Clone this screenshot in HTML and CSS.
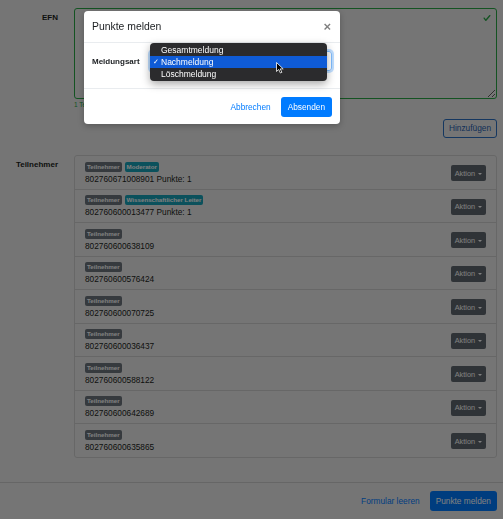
FILE: index.html
```html
<!DOCTYPE html>
<html lang="de">

<head>
    <meta charset="UTF-8">
    <meta name="viewport" content="width=device-width, initial-scale=1.0">
    <title>Punkte melden</title>
    <link rel="stylesheet" href="styles.css">
</head>

<body>
    <div class="page">
        <div class="form-row">
            <label class="row-label">EFN</label>
            <div class="row-field">
                <div class="efn-box">
                    <textarea class="efn-input"></textarea>
                    <svg class="valid-icon" viewBox="0 0 8 8" width="8" height="8">
                        <path fill="#28a745" d="M2.3 6.73L.6 4.53c-.4-1.04.46-1.4 1.1-.8l1.1 1.4 3.4-3.8c.6-.63 1.6-.27 1.2.7l-4 4.6c-.43.5-.8.4-1.1.1z"/>
                    </svg>
                </div>
                <div class="valid-feedback">1 Teilnehmer erkannt</div>
                <div class="add-line">
                    <button class="btn btn-outline">Hinzufügen</button>
                </div>
            </div>
        </div>

        <div class="form-row list-row">
            <label class="row-label">Teilnehmer</label>
            <ul class="member-list">
                <li class="member">
                    <div class="member-info">
                        <div class="badges"><span class="badge">Teilnehmer</span><span class="badge badge-teal">Moderator</span></div>
                        <div class="member-id">802760671008901 Punkte: 1</div>
                    </div>
                    <button class="btn btn-action">Aktion</button>
                </li>
                <li class="member">
                    <div class="member-info">
                        <div class="badges"><span class="badge">Teilnehmer</span><span class="badge badge-teal">Wissenschaftlicher Leiter</span></div>
                        <div class="member-id">802760600013477 Punkte: 1</div>
                    </div>
                    <button class="btn btn-action">Aktion</button>
                </li>
                <li class="member">
                    <div class="member-info">
                        <div class="badges"><span class="badge">Teilnehmer</span></div>
                        <div class="member-id">802760600638109</div>
                    </div>
                    <button class="btn btn-action">Aktion</button>
                </li>
                <li class="member">
                    <div class="member-info">
                        <div class="badges"><span class="badge">Teilnehmer</span></div>
                        <div class="member-id">802760600576424</div>
                    </div>
                    <button class="btn btn-action">Aktion</button>
                </li>
                <li class="member">
                    <div class="member-info">
                        <div class="badges"><span class="badge">Teilnehmer</span></div>
                        <div class="member-id">802760600070725</div>
                    </div>
                    <button class="btn btn-action">Aktion</button>
                </li>
                <li class="member">
                    <div class="member-info">
                        <div class="badges"><span class="badge">Teilnehmer</span></div>
                        <div class="member-id">802760600036437</div>
                    </div>
                    <button class="btn btn-action">Aktion</button>
                </li>
                <li class="member">
                    <div class="member-info">
                        <div class="badges"><span class="badge">Teilnehmer</span></div>
                        <div class="member-id">802760600588122</div>
                    </div>
                    <button class="btn btn-action">Aktion</button>
                </li>
                <li class="member">
                    <div class="member-info">
                        <div class="badges"><span class="badge">Teilnehmer</span></div>
                        <div class="member-id">802760600642689</div>
                    </div>
                    <button class="btn btn-action">Aktion</button>
                </li>
                <li class="member">
                    <div class="member-info">
                        <div class="badges"><span class="badge">Teilnehmer</span></div>
                        <div class="member-id">802760600635865</div>
                    </div>
                    <button class="btn btn-action">Aktion</button>
                </li>
            </ul>
        </div>
    </div>

    <div class="page-footer">
        <a class="link-btn" href="#">Formular leeren</a>
        <button class="btn btn-primary">Punkte melden</button>
    </div>

    <!-- modal over the page -->
    <div class="backdrop"></div>
    <div class="modal">
        <div class="modal-head">
            <span class="modal-title">Punkte melden</span>
            <span class="modal-close">&times;</span>
        </div>
        <div class="modal-body">
            <span class="body-label">Meldungsart</span>
            <div class="select-box"></div>
        </div>
        <div class="modal-foot">
            <a class="link-btn" href="#">Abbrechen</a>
            <button class="btn btn-primary">Absenden</button>
        </div>

        <ul class="select-menu">
            <li class="menu-item">Gesamtmeldung</li>
            <li class="menu-item selected">Nachmeldung</li>
            <li class="menu-item">Löschmeldung</li>
        </ul>

        <svg class="cursor" viewBox="0 0 8 12" width="8" height="12">
            <path d="M0.5 0.5 L0.5 9.5 L2.7 7.4 L4.4 11 L5.9 10.3 L4.2 6.9 L7.2 6.9 Z" fill="#000" stroke="#fff" stroke-width="0.8"/>
        </svg>
    </div>
</body>

</html>
```

FILE: styles.css
```css
body {
    margin: 0;
    font-family: "Liberation Sans", Arial, sans-serif;
    font-size: 8.3px;
    color: #1b1e21;
    background-color: #ebebeb;
}

.page {
    padding: 8px 6px 0 0;
}

.form-row {
    display: grid;
    grid-template-columns: 58px 1fr;
    column-gap: 16px;
}

.list-row {
    margin-top: 17px;
}

.row-label {
    text-align: right;
    font-weight: bold;
    font-size: 8px;
    line-height: 9px;
    padding-top: 5px;
}

.efn-box {
    position: relative;
}

.efn-input {
    display: block;
    width: 100%;
    height: 91px;
    box-sizing: border-box;
    border: 1px solid #28a745;
    border-radius: 3px;
    background: transparent;
    margin: 0;
}

.valid-icon {
    position: absolute;
    top: 6px;
    right: 6px;
}

.valid-feedback {
    color: #28a745;
    font-size: 6.5px;
    line-height: 12px;
}

.add-line {
    display: flex;
    justify-content: flex-end;
    margin-top: 8px;
}

.btn {
    font-family: inherit;
    border: 1px solid transparent;
    border-radius: 3px;
    cursor: pointer;
}

.btn-outline {
    background: transparent;
    border-color: #2a6fc0;
    color: #1f5fb0;
    font-size: 8.3px;
    line-height: 11px;
    padding: 3px 5px;
}

.btn-primary {
    background-color: #007bff;
    color: #fff;
    font-size: 8.3px;
    height: 20px;
    padding: 0 5px;
}

.member-list {
    list-style: none;
    margin: 0;
    padding: 0;
    border: 1px solid #cfcfcf;
    border-radius: 3px;
}

.member {
    display: flex;
    align-items: center;
    justify-content: space-between;
    padding: 5.5px 10px 4px 10px;
}

.member + .member {
    border-top: 1px solid #cfcfcf;
}

.badges {
    display: flex;
    gap: 3px;
    margin-bottom: 2px;
}

.badge {
    display: inline-block;
    background-color: #6c757d;
    color: #fff;
    font-size: 6.2px;
    font-weight: bold;
    line-height: 10px;
    padding: 0 2px;
    border-radius: 2px;
}

.badge-teal {
    background-color: #17a2b8;
}

.member-id {
    font-size: 8.3px;
    line-height: 11px;
}

.btn-action {
    background-color: #5f676e;
    color: #fff;
    font-size: 7.3px;
    height: 16px;
    padding: 0 3px;
    border-radius: 2px;
}

.btn-action::after {
    content: "";
    display: inline-block;
    margin-left: 3px;
    vertical-align: 1px;
    border-top: 2.5px solid #fff;
    border-left: 2.5px solid transparent;
    border-right: 2.5px solid transparent;
}

.page-footer {
    margin-top: 24px;
    border-top: 1px solid #cdcdcd;
    padding: 8px 6px 9px;
    display: flex;
    justify-content: flex-end;
    align-items: center;
    gap: 5px;
}

.link-btn {
    color: #007bff;
    text-decoration: none;
    padding: 0 5px;
    font-size: 8.3px;
}

/* modal */
.backdrop {
    position: fixed;
    top: 0;
    left: 0;
    right: 0;
    bottom: 0;
    background-color: rgba(0, 0, 0, 0.5);
}

.modal {
    position: absolute;
    top: 11px;
    left: 84px;
    width: 256px;
    background-color: #fff;
    border-radius: 4px;
    box-shadow: 0 2px 6px rgba(0, 0, 0, 0.25);
}

.modal-head {
    display: flex;
    justify-content: space-between;
    align-items: center;
    height: 32px;
    box-sizing: border-box;
    padding: 0 9px 0 8px;
    border-bottom: 1px solid #e9ecef;
}

.modal-title {
    font-size: 10.4px;
}

.modal-close {
    font-size: 13px;
    font-weight: bold;
    color: #000;
    opacity: 0.5;
}

.modal-body {
    display: flex;
    align-items: center;
    height: 45px;
    box-sizing: border-box;
    padding: 8px 8px 17px;
}

.body-label {
    width: 58px;
    font-weight: bold;
    font-size: 8px;
}

.select-box {
    flex: 1;
    height: 20px;
    box-sizing: border-box;
    border: 1px solid #80bdff;
    border-radius: 3px;
    box-shadow: 0 0 0 2px rgba(0, 123, 255, 0.25);
}

.modal-foot {
    display: flex;
    justify-content: flex-end;
    align-items: center;
    gap: 5px;
    height: 36px;
    box-sizing: border-box;
    padding: 0 8px;
    border-top: 1px solid #e9ecef;
}

.modal-foot .btn-primary {
    padding: 0 6px;
}

.select-menu {
    position: absolute;
    top: 32px;
    left: 66px;
    width: 177px;
    margin: 0;
    padding: 1px 0;
    list-style: none;
    background-color: #2b2b2d;
    border-radius: 4px;
    box-shadow: 0 3px 8px rgba(0, 0, 0, 0.35);
}

.menu-item {
    position: relative;
    height: 12px;
    line-height: 12px;
    padding-left: 11px;
    color: #fff;
    font-size: 8.5px;
}

.menu-item.selected {
    background-color: #0f5bd6;
}

.menu-item.selected::before {
    content: "\2713";
    position: absolute;
    left: 3px;
    font-size: 7px;
}

.cursor {
    position: absolute;
    left: 192px;
    top: 51px;
}
```
